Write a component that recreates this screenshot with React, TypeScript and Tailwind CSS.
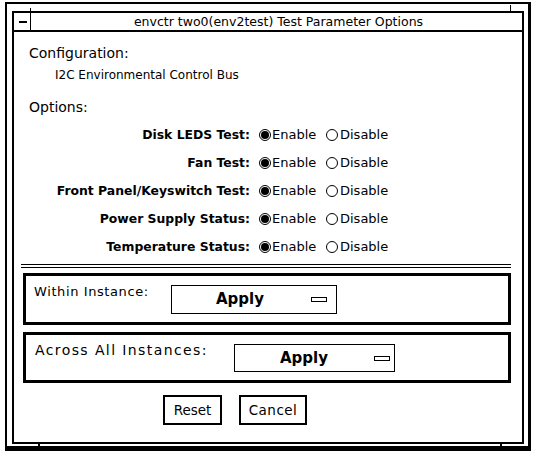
import { useState } from "react";

const sans = "font-['DejaVu_Sans',sans-serif]";

type Opt = { label: string; on: boolean };

const initial: Opt[] = [
  { label: "Disk LEDS Test:", on: true },
  { label: "Fan Test:", on: true },
  { label: "Front Panel/Keyswitch Test:", on: true },
  { label: "Power Supply Status:", on: true },
  { label: "Temperature Status:", on: true },
];

function Radio({ checked, onClick }: { checked: boolean; onClick: () => void }) {
  return (
    <button
      onClick={onClick}
      className="flex h-[12px] w-[12px] shrink-0 items-center justify-center rounded-full border border-black"
    >
      {checked && <span className="h-[8px] w-[8px] rounded-full bg-black" />}
    </button>
  );
}

function ApplyButton({ width, height, padLeft, padRight }: { width: string; height: string; padLeft: string; padRight: string }) {
  return (
    <button className={`flex items-center border border-black ${width} ${height} ${padLeft} ${padRight}`}>
      <span className="text-[15px] font-bold leading-none">Apply</span>
      <span className="ml-auto h-[5px] w-[16px] border border-black" />
    </button>
  );
}

export default function App() {
  const [opts, setOpts] = useState(initial);
  const set = (i: number, on: boolean) =>
    setOpts((o) => o.map((x, j) => (j === i ? { ...x, on } : x)));

  return (
    <div className={`h-[458px] w-[538px] overflow-hidden bg-white pl-[5px] pt-[2px] text-black ${sans}`}>
      <div className="relative h-[449px] w-[526px] border-b-[5px] border-l-2 border-r-[3px] border-t-2 border-black">
        {/* resize corner ticks */}
        <span className="absolute left-[31px] top-[438px] h-[7px] w-[2px] bg-black" />
        <span className="absolute left-[493px] top-[438px] h-[7px] w-[2px] bg-black" />
        <span className="absolute left-[503px] top-[1px] h-[7px] w-[1px] bg-black" />
        <span className="absolute left-[23px] top-[4px] h-[7px] w-[1px] bg-black" />

        <div className="ml-[5px] mt-[7px] flex h-[433px] w-[512px] flex-col border-2 border-black">
          {/* title bar */}
          <div className="flex h-[19px] shrink-0 border-b-2 border-black">
            <div className="flex w-[17px] shrink-0 items-center border-r border-black">
              <span className="ml-[5px] mt-[1px] h-[2px] w-[8px] bg-black" />
            </div>
            <div className="flex-1 pl-[4px] text-center text-[12.5px] leading-[17px]">
              envctr two0(env2test) Test Parameter Options
            </div>
          </div>

          <div className="mt-[13px] pl-[15px] text-[14px] leading-[16px]">Configuration:</div>
          <div className="mt-[6px] pl-[41px] text-[12px] leading-[16px]">
            I2C Environmental Control Bus
          </div>
          <div className="mt-[16px] pl-[15px] text-[14px] leading-[16px]">Options:</div>

          <div className="mt-[6px] flex flex-col pl-[15px]">
            {opts.map((o, i) => (
              <div key={o.label} className="flex h-[28px] items-center">
                <span className="w-[221px] text-right text-[12.4px] font-bold leading-[14px]">{o.label}</span>
                <span className="ml-[9px]">
                  <Radio checked={o.on} onClick={() => set(i, true)} />
                </span>
                <span className="ml-[1px] w-[54px] text-[13px] leading-[14px]">Enable</span>
                <Radio checked={!o.on} onClick={() => set(i, false)} />
                <span className="ml-[2px] text-[13px] leading-[14px]">Disable</span>
              </div>
            ))}
          </div>

          <div className="ml-[7px] mr-[11px] mt-[3px] h-[4px] border-y border-black" />

          <div className="ml-[9px] mr-[11px] mt-[5px] flex h-[52px] items-start border-[3px] border-black pl-[8px] pt-[8px]">
            <span className="w-[137px] shrink-0 text-[13px] leading-[16px] tracking-[0.6px]">
              Within Instance:
            </span>
            <div className="mt-[1px]">
              <ApplyButton width="w-[166px]" height="h-[29px]" padLeft="pl-[44px]" padRight="pr-[9px]" />
            </div>
          </div>

          <div className="ml-[9px] mr-[11px] mt-[7px] flex h-[51px] items-start border-[3px] border-black pl-[9px] pt-[7px]">
            <span className="w-[199px] shrink-0 text-[14px] leading-[16px] tracking-[1.4px]">
              Across All Instances:
            </span>
            <div className="mt-[2px]">
              <ApplyButton width="w-[161px]" height="h-[28px]" padLeft="pl-[45px]" padRight="pr-[4px]" />
            </div>
          </div>

          <div className="ml-[149px] mt-[12px] flex gap-[17px]">
            <button className="h-[30px] w-[59px] border-2 border-black text-[13.5px]">Reset</button>
            <button className="h-[30px] w-[68px] border-2 border-black text-[13.5px] tracking-[0.5px]">
              Cancel
            </button>
          </div>
        </div>
      </div>
    </div>
  );
}
